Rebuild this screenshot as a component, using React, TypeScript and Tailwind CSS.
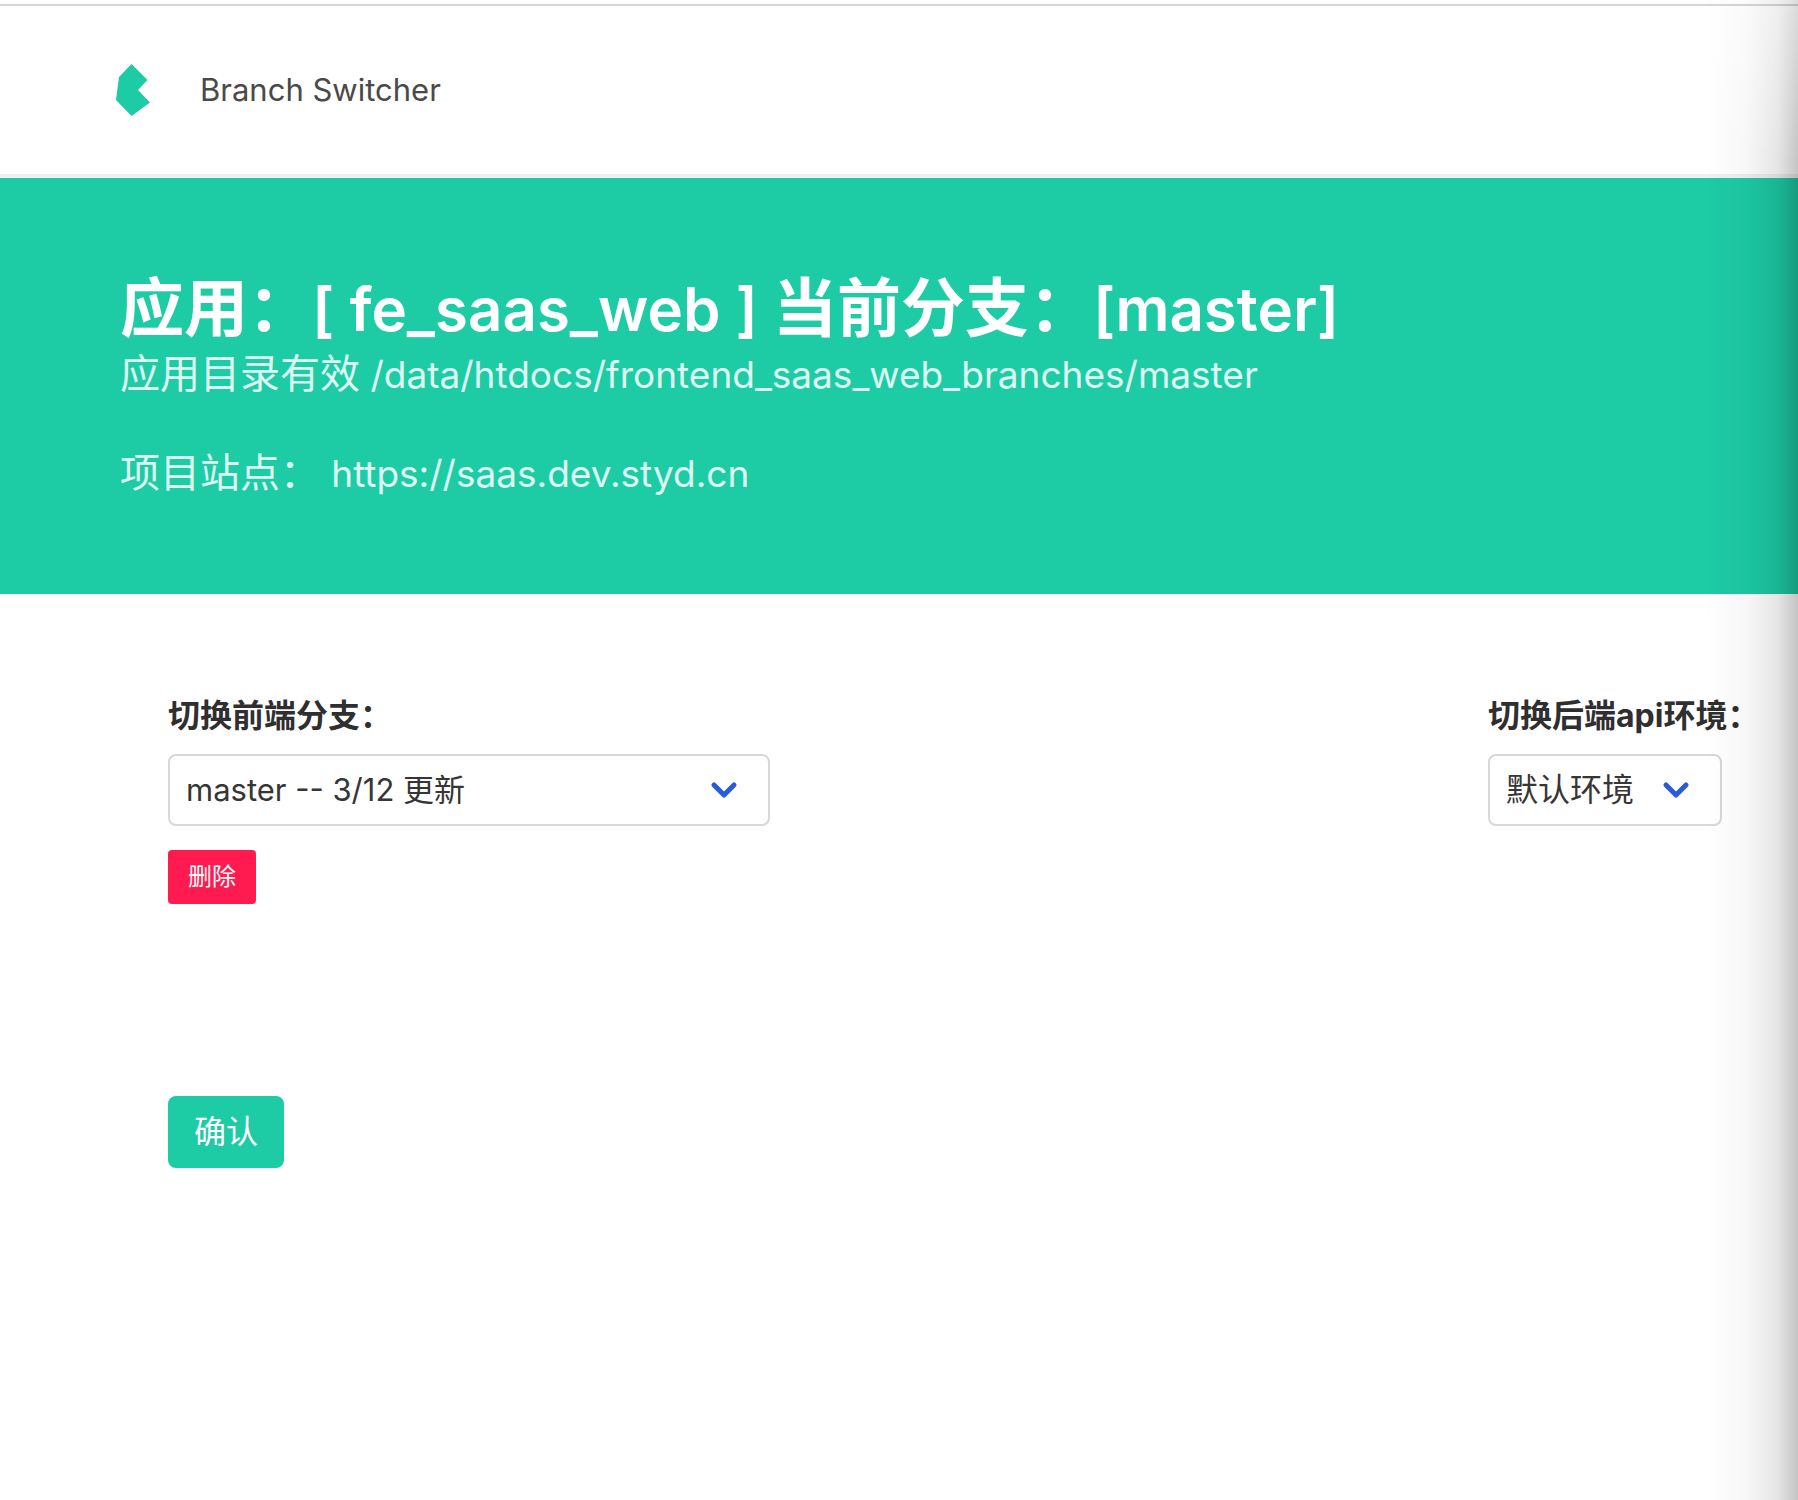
import React from "react";

function Logo() {
  return (
    <svg width="36" height="54" viewBox="0 0 36 54" aria-hidden="true">
      <path d="M16.5 1 L32.5 17 L23 27 L35 39.5 L16.5 53 L1 37 L4 14 Z" fill="#1dcba5" />
    </svg>
  );
}

function Select({ id, size, options }: { id: string; size: string; options: string[] }) {
  return (
    <div className={"relative " + size}>
      <select
        id={id}
        className="block h-[72px] w-full appearance-none rounded-lg border-2 border-[#d8d8d8] bg-white pr-16 pl-4 text-[#363636]"
      >
        {options.map((o) => (
          <option key={o}>{o}</option>
        ))}
      </select>
      <svg
        className="pointer-events-none absolute top-1/2 right-8 -translate-y-1/2"
        width="28"
        height="20"
        viewBox="0 0 28 20"
        fill="none"
        stroke="#285cdb"
        strokeWidth="5"
        strokeLinecap="round"
        strokeLinejoin="round"
        aria-hidden="true"
      >
        <path d="M4 5 L14 15 L24 5" />
      </svg>
    </div>
  );
}

export default function App() {
  return (
    <div className="relative min-h-screen overflow-hidden bg-white font-['Inter','Noto_Sans_CJK_SC',sans-serif]">
      <header className="mt-1 flex items-center gap-[49px] border-t-2 border-b-4 border-t-[#d5d5da] border-b-[#f0f0ee] px-[115px] py-[57px]">
        <Logo />
        <a href="#" className="text-[31px] leading-[54px] text-[#4a4a4a]">
          Branch Switcher
        </a>
      </header>

      <section className="bg-[#1dcba5] px-[120px] pt-[90px] pb-[95px] text-white">
        <h1 className="text-[64px] leading-[80px] font-semibold whitespace-nowrap">
          应用：<span className="text-[60px]">[ fe_saas_web ] </span>当前分支：<span className="text-[60px]">[master]</span>
        </h1>
        <p className="text-[40px] leading-[50px] whitespace-nowrap text-white/85">
          应用目录有效<span className="text-[37px]"> /data/htdocs/frontend_saas_web_branches/master</span>
        </p>
        <p className="mt-12 text-[40px] leading-[50px] whitespace-nowrap text-white/85">
          项目站点：{" "}
          <a href="https://saas.dev.styd.cn" className="text-[37px]">
            https://saas.dev.styd.cn
          </a>
        </p>
      </section>

      <main className="pt-[98px] pl-[168px]">
        <div className="grid grid-cols-[1fr_310px]">
          <div>
            <label htmlFor="branch" className="mb-[14px] block text-[32px] leading-[48px] font-bold text-[#2f2f2f]">
              切换前端分支：
            </label>
            <Select id="branch" size="w-[602px] text-[31px]" options={["master -- 3/12 更新"]} />
            <button type="button" className="mt-6 h-[54px] rounded bg-[#ff1a50] px-5 text-2xl text-white">
              删除
            </button>
          </div>
          <div>
            <label htmlFor="env" className="mb-[14px] block text-[32px] leading-[48px] font-bold text-[#2f2f2f]">
              切换后端api环境：
            </label>
            <Select id="env" size="w-[234px] text-[32px]" options={["默认环境"]} />
          </div>
        </div>
        <button type="submit" className="mt-48 h-[72px] rounded-lg bg-[#1dcba5] px-[26px] text-[32px] text-white">
          确认
        </button>
      </main>

      <div className="pointer-events-none absolute inset-y-0 right-0 w-[92px] bg-[linear-gradient(to_right,rgba(0,0,0,0),rgba(0,0,0,0.03)_45%,rgba(0,0,0,0.1)_78%,rgba(0,0,0,0.23))] [mask-image:linear-gradient(to_bottom,rgba(0,0,0,0.6),black_160px)]" />
    </div>
  );
}
